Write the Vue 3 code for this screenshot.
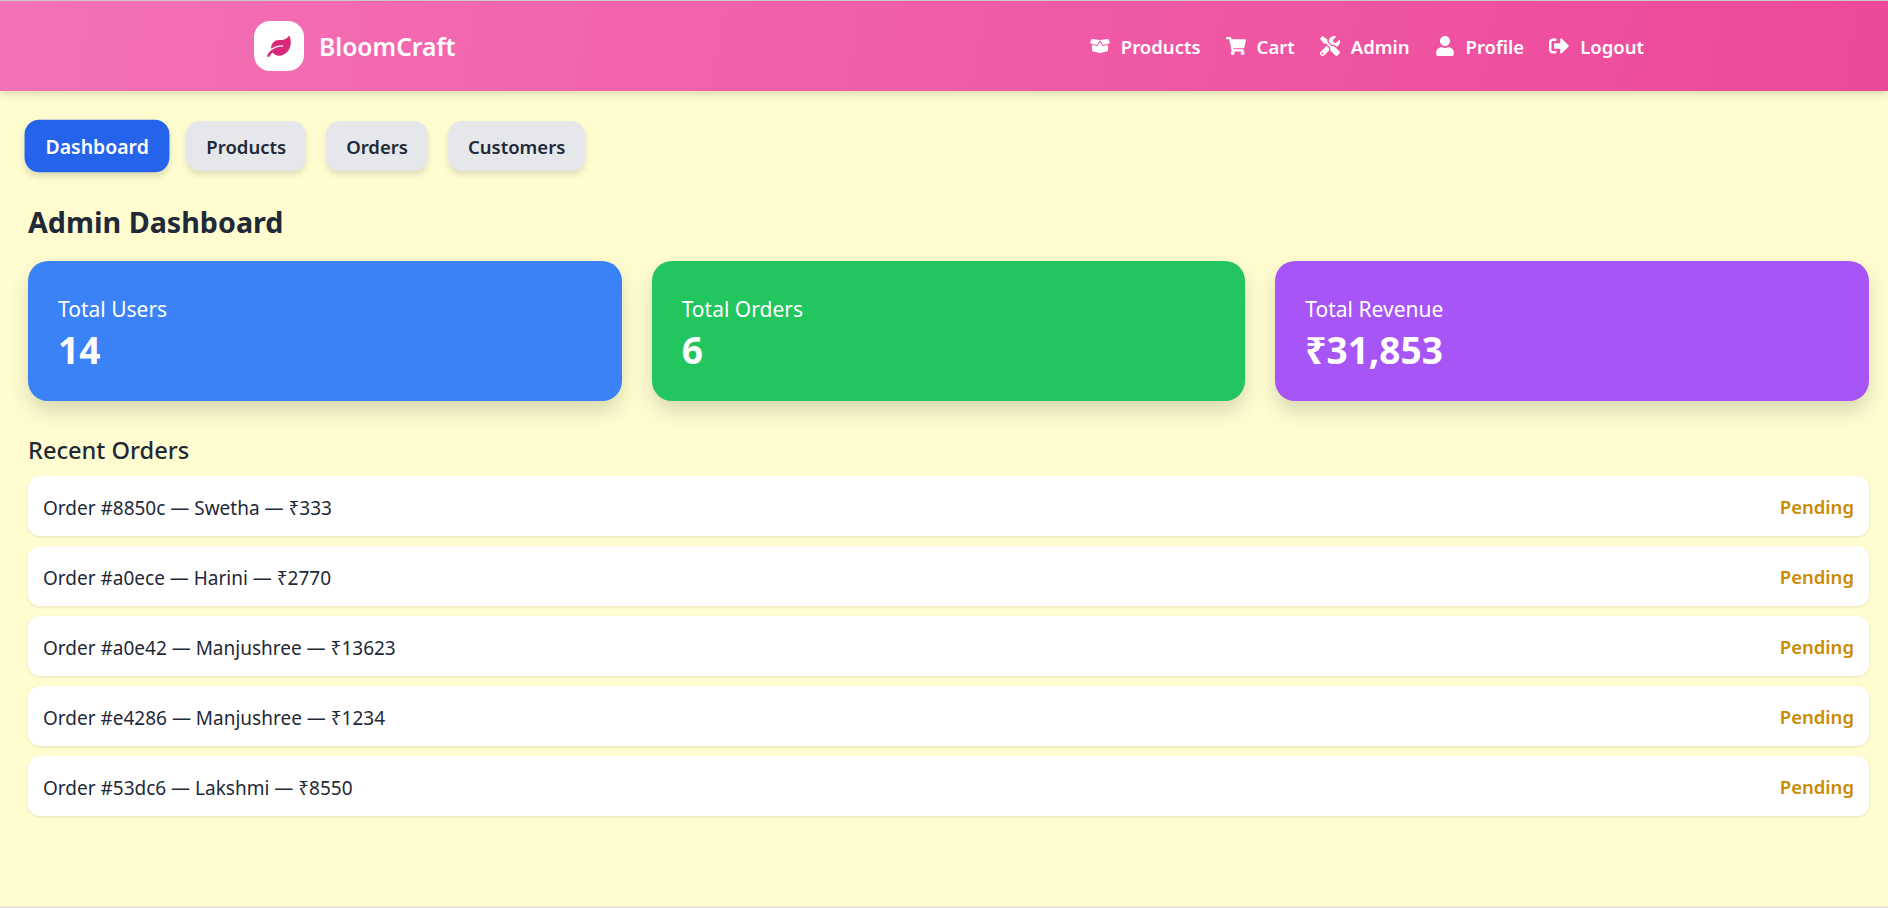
<script setup>
const navItems = [
  { label: 'Products', vb: '0 0 640 512', d: 'M425.7 256c-16.9 0-32.8-9-41.4-23.4L320 126l-64.2 106.6c-8.7 14.5-24.6 23.5-41.5 23.5-4.5 0-9-.6-13.3-1.9L64 215v178c0 14.7 10 27.5 24.2 31l216.2 54.1c10.2 2.5 20.9 2.5 31 0L551.8 424c14.2-3.6 24.2-16.4 24.2-31V215l-137 39.1c-4.3 1.3-8.8 1.9-13.3 1.9zm212.6-112.2L586.8 41c-3.1-6.2-9.8-9.8-16.7-8.9L320 64l91.7 152.1c3.8 6.3 11.4 9.3 18.5 7.3l197.9-56.5c9.9-2.9 14.7-13.9 9.9-23.1zM53.2 41L1.7 143.8c-4.9 9.2 0 20.2 9.8 23l197.9 56.5c7.1 2 14.7-1 18.5-7.3L320 64 69.8 32.1c-6.9-.8-13.5 2.7-16.6 8.9z' },
  { label: 'Cart', vb: '0 0 576 512', d: 'M528.12 301.319l47.273-208C578.806 78.301 567.391 64 551.99 64H159.208l-9.166-44.81C147.758 8.021 137.93 0 126.529 0H24C10.745 0 0 10.745 0 24v16c0 13.255 10.745 24 24 24h69.883l70.248 343.435C147.325 417.1 136 435.222 136 456c0 30.928 25.072 56 56 56s56-25.072 56-56c0-15.674-6.447-29.835-16.824-40h209.647C430.447 426.165 424 440.326 424 456c0 30.928 25.072 56 56 56s56-25.072 56-56c0-22.172-12.888-41.332-31.579-50.405l5.517-24.276c3.413-15.018-8.002-29.319-23.403-29.319H218.117l-6.545-32h293.145c11.206 0 20.92-7.754 23.403-18.681z' },
  { label: 'Admin', vb: '0 0 512 512', d: 'M501.1 395.7L384 278.6c-23.1-23.1-57.6-27.6-85.4-13.9L192 158.1V96L64 0 0 64l96 128h62.1l106.6 106.6c-13.6 27.8-9.2 62.3 13.9 85.4l117.1 117.1c14.6 14.6 38.2 14.6 52.7 0l52.7-52.7c14.5-14.6 14.5-38.2 0-52.7zM331.7 225c28.3 0 54.9 11 74.9 31l19.4 19.4c15.8-6.9 30.8-16.5 43.8-29.5 37.1-37.1 49.7-89.3 37.9-136.7-2.2-9-13.5-12.1-20.1-5.5l-74.4 74.4-67.9-11.3L334 98.9l74.4-74.4c6.6-6.6 3.4-17.9-5.7-20.2-47.4-11.7-99.6.9-136.6 37.9-28.5 28.5-41.9 66.1-41.2 103.6l82.1 82.1c8.1-1.9 16.5-2.9 24.7-2.9zm-103.9 82l-56.7-56.7L18.7 402.8c-25 25-25 65.5 0 90.5s65.5 25 90.5 0l123.6-123.6c-7.6-19.9-9.9-41.6-5-62.7zM64 472c-13.2 0-24-10.8-24-24 0-13.3 10.7-24 24-24s24 10.7 24 24c0 13.2-10.7 24-24 24z' },
  { label: 'Profile', vb: '0 0 448 512', d: 'M224 256c70.7 0 128-57.3 128-128S294.7 0 224 0 96 57.3 96 128s57.3 128 128 128zm89.6 32h-16.7c-22.2 10.2-46.9 16-72.9 16s-50.6-5.8-72.9-16h-16.7C60.2 288 0 348.2 0 422.4V464c0 26.5 21.5 48 48 48h352c26.5 0 48-21.5 48-48v-41.6c0-74.2-60.2-134.4-134.4-134.4z' },
  { label: 'Logout', vb: '0 0 512 512', d: 'M497 273L329 441c-15 15-41 4.5-41-17v-96H152c-13.3 0-24-10.7-24-24v-96c0-13.3 10.7-24 24-24h136V88c0-21.4 25.9-32 41-17l168 168c9.3 9.4 9.3 24.6 0 34zM192 436v-40c0-6.6-5.4-12-12-12H96c-17.7 0-32-14.3-32-32V160c0-17.7 14.3-32 32-32h84c6.6 0 12-5.4 12-12V76c0-6.6-5.4-12-12-12H96c-53 0-96 43-96 96v192c0 53 43 96 96 96h84c6.6 0 12-5.4 12-12z' }
]
const tabs = ['Dashboard', 'Products', 'Orders', 'Customers']
const stats = [
  { label: 'Total Users', value: '14', cls: 'blue' },
  { label: 'Total Orders', value: '6', cls: 'green' },
  { label: 'Total Revenue', value: '₹31,853', cls: 'purple' }
]
const orders = [
  'Order #8850c — Swetha — ₹333',
  'Order #a0ece — Harini — ₹2770',
  'Order #a0e42 — Manjushree — ₹13623',
  'Order #e4286 — Manjushree — ₹1234',
  'Order #53dc6 — Lakshmi — ₹8550'
]
</script>

<template>
  <div class="page">
    <header class="header">
      <div class="brand">
        <span class="logo">
          <svg viewBox="0 0 576 512" class="leaf"><path d="M546.2 9.7c-5.6-12.5-21.6-13-28.3-1.2C486.9 62.4 431.4 96 368 96h-80C182 96 96 182 96 288c0 7 .8 13.7 1.5 20.5C161.3 262.8 253.4 224 384 224c8.8 0 16 7.2 16 16s-7.2 16-16 16C132.6 256 26 410.1 2.4 468c-6.6 16.3 1.2 34.9 17.5 41.6 16.4 6.8 35-1.1 41.8-17.3 1.5-3.6 20.9-47.9 71.9-90.6 32.4 43.9 94 85.8 174.9 77.2C465.5 467.5 576 326.7 576 154.3c0-50.2-10.8-102.2-29.8-144.6z" /></svg>
        </span>
        <span class="brand-name">BloomCraft</span>
      </div>
      <nav class="nav">
        <a v-for="n in navItems" :key="n.label" class="nav-item">
          <svg :viewBox="n.vb" class="nav-icon"><path :d="n.d" /></svg>
          <span class="nav-text">{{ n.label }}</span>
        </a>
      </nav>
    </header>

    <main class="main">
      <div class="tabs">
        <button v-for="(t, i) in tabs" :key="t" :class="['tab', { active: i === 0 }]">{{ t }}</button>
      </div>
      <h1 class="title">Admin Dashboard</h1>
      <section class="stats">
        <div v-for="s in stats" :key="s.label" :class="['stat', s.cls]">
          <div class="stat-label">{{ s.label }}</div>
          <div class="stat-value">{{ s.value }}</div>
        </div>
      </section>
      <h2 class="subtitle">Recent Orders</h2>
      <ul class="orders">
        <li v-for="o in orders" :key="o" class="order">
          <span class="order-text">{{ o }}</span>
          <span class="status">Pending</span>
        </li>
      </ul>
    </main>
  </div>
</template>

<style>
html, body { margin: 0; padding: 0; background: #fffdd0; }
</style>

<style scoped>
.page {
  height: 908px;
  box-sizing: border-box;
  overflow: hidden;
  background: #fffdd0;
  border-top: 1px solid #c9c9c9;
  border-bottom: 2px solid #e5e5e0;
  font-family: "Noto Sans", "Open Sans", sans-serif;
  color: #1f2937;
}
.header {
  height: 90px;
  box-sizing: border-box;
  display: flex;
  align-items: center;
  justify-content: space-between;
  padding: 0 244px 0 254px;
  background: linear-gradient(100deg, #f472b6, #ec4899);
  box-shadow: 0 3px 8px rgba(0, 0, 0, 0.15);
  color: #fff;
}
.brand { display: flex; align-items: center; gap: 15px; }
.logo {
  width: 50px;
  height: 50px;
  border-radius: 16px;
  background: #fff;
  display: flex;
  align-items: center;
  justify-content: center;
}
.leaf { width: 24px; height: 21px; fill: #db2777; }
.brand-name { font-size: 24.6px; font-weight: 600; }
.nav { display: flex; align-items: center; gap: 25px; }
.nav-item { display: flex; align-items: center; gap: 11px; font-size: 18.5px; font-weight: 600; }
.nav-text { padding-top: 1px; }
.nav-icon { width: 20px; height: 20px; fill: #fff; display: block; }
.main { padding: 30px 19px 0 28px; }
.tabs { display: flex; gap: 20px; align-items: center; height: 50px; }
.tab {
  height: 50px;
  padding: 0 20px;
  border: 0;
  border-radius: 14px;
  background: #e5e7eb;
  color: #1f2937;
  font: 600 18.5px "Noto Sans", sans-serif;
  box-shadow: 0 4px 6px rgba(0, 0, 0, 0.12);
}
.tab.active {
  background: #2563eb;
  color: #fff;
  transform: scale(1.05);
}
.title { margin: 31px 0 0; font-size: 28.7px; line-height: 40px; font-weight: 700; color: #1f2937; }
.stats { display: grid; grid-template-columns: repeat(3, 1fr); gap: 30px; margin-top: 19px; }
.stat {
  height: 140px;
  box-sizing: border-box;
  padding: 32px 30px 0;
  border-radius: 20px;
  color: #fff;
  box-shadow: 0 10px 20px rgba(0, 0, 0, 0.15);
}
.blue { background: #3b82f6; }
.green { background: #22c55e; }
.purple { background: #a855f7; }
.stat-label { font-size: 21px; line-height: 32px; }
.stat-value { font-size: 37px; line-height: 48px; font-weight: 700; margin-top: 1px; }
.subtitle { margin: 32px 0 0; font-size: 23.6px; line-height: 34px; font-weight: 500; color: #1f2937; }
.orders { list-style: none; margin: 9px 0 0; padding: 0; display: flex; flex-direction: column; gap: 10px; }
.order {
  height: 60px;
  box-sizing: border-box;
  padding: 0 15px;
  display: flex;
  align-items: center;
  justify-content: space-between;
  background: #fff;
  border-radius: 12px;
  font-size: 19px;
  box-shadow: 0 1px 3px rgba(0, 0, 0, 0.1);
}
.order-text { padding-top: 3px; }
.status { color: #ca8a04; font-weight: 600; font-size: 18.5px; }
</style>
